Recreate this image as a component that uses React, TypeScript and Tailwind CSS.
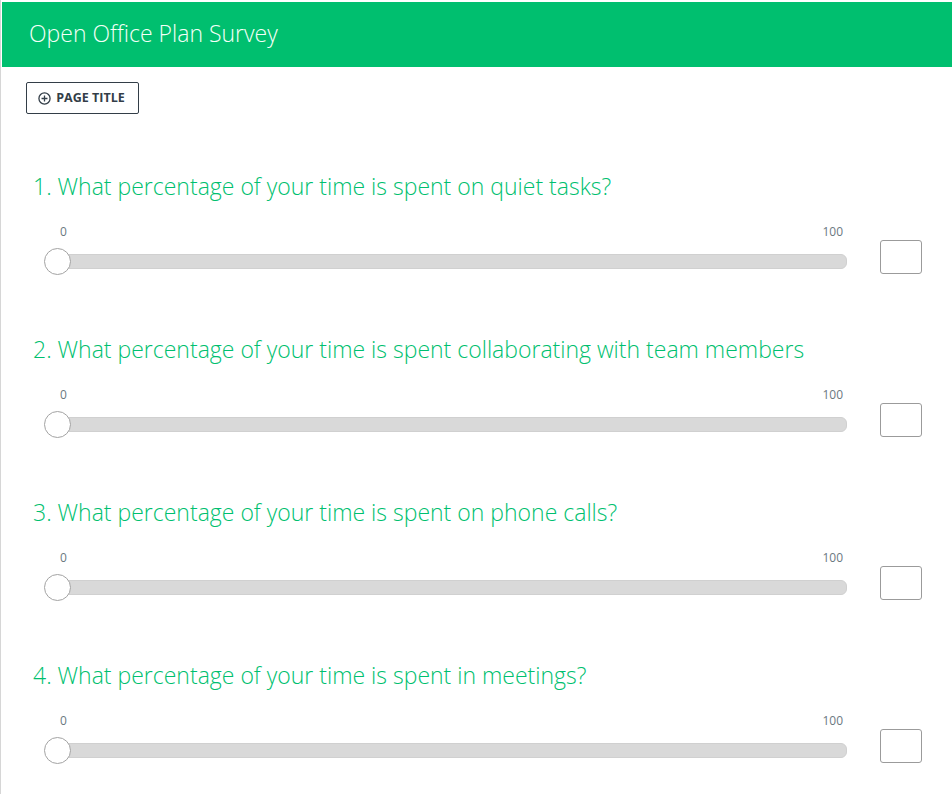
import React from "react";

const questions = [
  "1. What percentage of your time is spent on quiet tasks?",
  "2. What percentage of your time is spent collaborating with team members",
  "3. What percentage of your time is spent on phone calls?",
  "4. What percentage of your time is spent in meetings?",
];

function PlusCircle() {
  return (
    <svg width="13" height="13" viewBox="0 0 14 14" fill="none" stroke="#333e48" strokeWidth="1.4">
      <circle cx="7" cy="7" r="6" />
      <path d="M7 3.8v6.4M3.8 7h6.4" />
    </svg>
  );
}

function SliderQuestion({ title }: { title: string }) {
  return (
    <div className="h-[163px]">
      <h2 className="pl-[31px] h-[28px] leading-[26px] text-[23px] font-light text-[#00bf6f] whitespace-nowrap">
        {title}
      </h2>
      <div className="flex items-start mt-[23px]">
        <div className="ml-[43px] w-[802px]">
          <div className="flex justify-between h-[16px] leading-[16px] text-[12px] text-[#6b787f] pl-[15px] pr-[4px]">
            <span>0</span>
            <span>100</span>
          </div>
          <div className="relative mt-[8px] h-[27px] flex items-center">
            <div className="w-full h-[15px] rounded-[6px] bg-[#d9d9d9] border border-[#d0d0d0]" />
            <div className="absolute left-[-1px] top-0 w-[27px] h-[27px] rounded-full bg-white border-[1.5px] border-[#a3a3a3]" />
          </div>
        </div>
        <input
          type="text"
          className="ml-[33px] mt-[16px] w-[42px] h-[34px] rounded-[3px] border border-[#9b9b9b] bg-white outline-none"
        />
      </div>
    </div>
  );
}

export default function App() {
  return (
    <div
      className="min-h-screen bg-white border-l border-[#d6d6d6] pl-[1px] pt-[2px]"
      style={{ fontFamily: '"Open Sans", "Liberation Sans", sans-serif' }}
    >
      <header className="h-[65px] bg-[#00bf6f] flex items-center pl-[27px] pb-[2px]">
        <h1 className="text-[23px] font-light text-[#f4fff8]">Open Office Plan Survey</h1>
      </header>

      <div className="pl-[24px] pt-[15px]">
        <button className="w-[113px] h-[32px] border border-[#333e48] rounded-[2px] flex items-center justify-center gap-[5px] pr-[2px] text-[12.5px] font-bold text-[#333e48]">
          <PlusCircle />
          PAGE TITLE
        </button>
      </div>

      <div className="mt-[59px]">
        {questions.map((q) => (
          <SliderQuestion key={q} title={q} />
        ))}
      </div>
    </div>
  );
}
